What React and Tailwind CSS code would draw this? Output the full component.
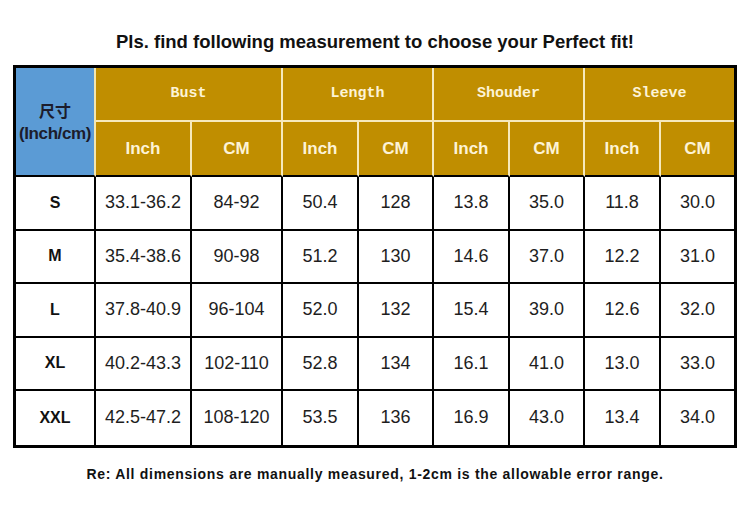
import React from 'react';

const groups = ['Bust', 'Length', 'Shouder', 'Sleeve'];

const rows = [
  ['S', '33.1-36.2', '84-92', '50.4', '128', '13.8', '35.0', '11.8', '30.0'],
  ['M', '35.4-38.6', '90-98', '51.2', '130', '14.6', '37.0', '12.2', '31.0'],
  ['L', '37.8-40.9', '96-104', '52.0', '132', '15.4', '39.0', '12.6', '32.0'],
  ['XL', '40.2-43.3', '102-110', '52.8', '134', '16.1', '41.0', '13.0', '33.0'],
  ['XXL', '42.5-47.2', '108-120', '53.5', '136', '16.9', '43.0', '13.4', '34.0'],
];

const colWidths = [80, 96, 91, 76, 75, 76, 75, 76, 73];

export default function App() {
  return (
    <div
      className="w-[750px] h-[517px] bg-white text-[#111]"
      style={{ fontFamily: '"Liberation Sans", Arial, "Noto Sans CJK SC", sans-serif' }}
    >
      <h1 className="pt-[32px] mb-[13px] text-center text-[18.5px] leading-[20px] font-bold">
        Pls. find following measurement to choose your Perfect fit!
      </h1>

      <div className="mx-auto w-[724px] border-[3px] border-black">
        <table className="w-full table-fixed border-separate border-spacing-0">
          <colgroup>
            {colWidths.map((w, i) => (
              <col key={i} style={{ width: w }} />
            ))}
          </colgroup>
          <thead>
            <tr className="h-[54px]">
              <th
                rowSpan={2}
                className="bg-[#5b9bd5] border-r-2 border-b-2 border-r-[#f4e6b0] border-b-black text-[#1c1c2c] font-bold leading-[24px]"
              >
                <div className="text-[16px]" style={{ fontFamily: '"Noto Sans CJK SC", sans-serif' }}>尺寸</div>
                <div className="text-[17px] tracking-[-0.4px] whitespace-nowrap">(Inch/cm)</div>
              </th>
              {groups.map((g, i) => (
                <th
                  key={g}
                  colSpan={2}
                  className={`bg-[#c08e00] border-b-2 border-[#f6e9bd] text-[#fdf3d6] text-[15px] font-bold ${i < 3 ? 'border-r-2' : ''}`}
                  style={{ fontFamily: '"Liberation Mono", "Courier New", monospace' }}
                >
                  {g}
                </th>
              ))}
            </tr>
            <tr className="h-[55px]">
              {groups.flatMap((g, i) =>
                ['Inch', 'CM'].map((u, j) => (
                  <th
                    key={g + u}
                    className={`bg-[#c08e00] border-b-2 border-b-black text-[#fdf3d6] text-[17px] font-bold ${
                      i === 3 && j === 1 ? '' : 'border-r-2 border-r-[#f6e9bd]'
                    }`}
                  >
                    {u}
                  </th>
                ))
              )}
            </tr>
          </thead>
          <tbody>
            {rows.map((r, ri) => (
              <tr key={r[0]} className="h-[53.5px]">
                {r.map((c, ci) => (
                  <td
                    key={ci}
                    className={`text-center border-black ${ci < 8 ? 'border-r-2' : ''} ${
                      ri < rows.length - 1 ? 'border-b-2' : ''
                    } ${ci === 0 ? 'text-[16px] font-bold' : 'text-[18px] text-[#1e1e1e]'}`}
                  >
                    {c}
                  </td>
                ))}
              </tr>
            ))}
          </tbody>
        </table>
      </div>

      <p className="mt-[16px] text-center text-[14px] leading-[20px] font-bold tracking-[0.7px]">
        Re: All dimensions are manually measured, 1-2cm is the allowable error range.
      </p>
    </div>
  );
}
